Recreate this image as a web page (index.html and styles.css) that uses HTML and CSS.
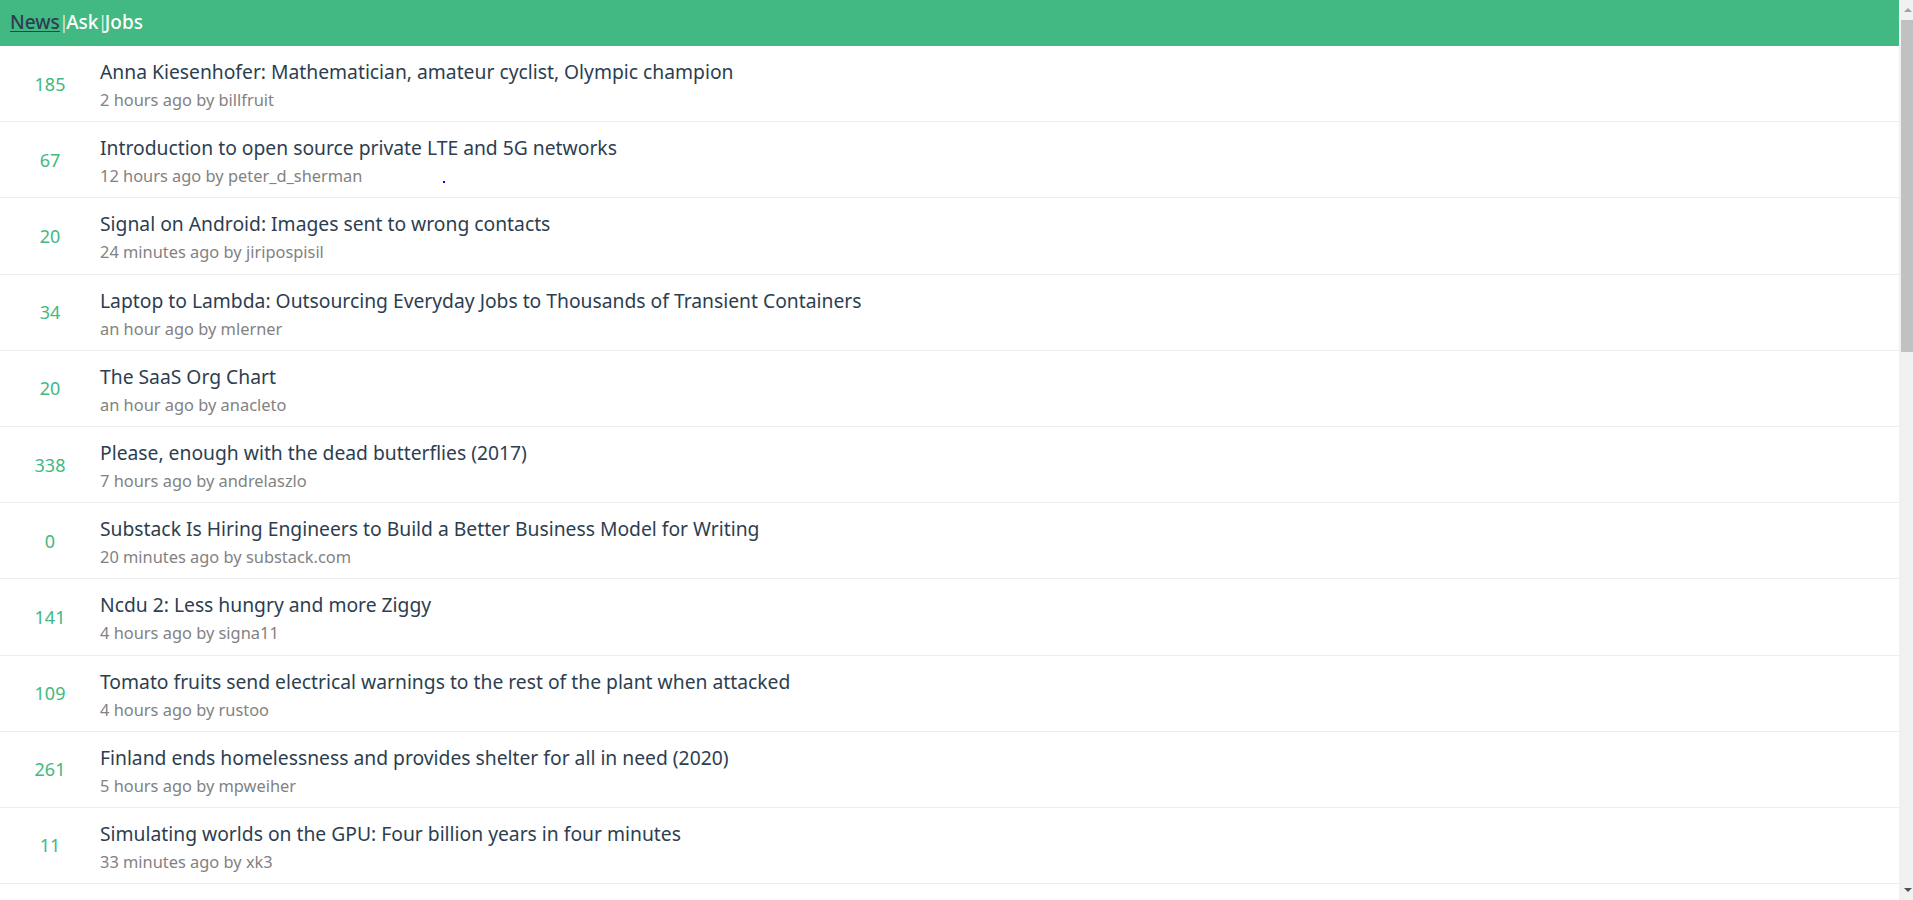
FILE: index.html
```html
<!DOCTYPE html>
<html lang="en">
<head>
<meta charset="utf-8">
<title>Hacker News</title>
<link rel="stylesheet" href="styles.css">
</head>
<body>
<header class="topbar">
  <nav class="nav">
    <a class="nav-link active" href="#">News</a><span class="sep">|</span><a class="nav-link" href="#">Ask</a><span class="sep">|</span><a class="nav-link" href="#">Jobs</a>
  </nav>
</header>
<main class="list">
  <div class="item"><div class="score">185</div><div class="body"><div class="title">Anna Kiesenhofer: Mathematician, amateur cyclist, Olympic champion</div><div class="meta">2 hours ago by billfruit</div></div></div>
  <div class="item"><div class="score">67</div><div class="body"><div class="title">Introduction to open source private LTE and 5G networks</div><div class="meta">12 hours ago by peter_d_sherman</div></div><span class="dot"></span></div>
  <div class="item"><div class="score">20</div><div class="body"><div class="title">Signal on Android: Images sent to wrong contacts</div><div class="meta">24 minutes ago by jiripospisil</div></div></div>
  <div class="item"><div class="score">34</div><div class="body"><div class="title">Laptop to Lambda: Outsourcing Everyday Jobs to Thousands of Transient Containers</div><div class="meta">an hour ago by mlerner</div></div></div>
  <div class="item"><div class="score">20</div><div class="body"><div class="title">The SaaS Org Chart</div><div class="meta">an hour ago by anacleto</div></div></div>
  <div class="item"><div class="score">338</div><div class="body"><div class="title">Please, enough with the dead butterflies (2017)</div><div class="meta">7 hours ago by andrelaszlo</div></div></div>
  <div class="item"><div class="score">0</div><div class="body"><div class="title">Substack Is Hiring Engineers to Build a Better Business Model for Writing</div><div class="meta">20 minutes ago by substack.com</div></div></div>
  <div class="item"><div class="score">141</div><div class="body"><div class="title">Ncdu 2: Less hungry and more Ziggy</div><div class="meta">4 hours ago by signa11</div></div></div>
  <div class="item"><div class="score">109</div><div class="body"><div class="title">Tomato fruits send electrical warnings to the rest of the plant when attacked</div><div class="meta">4 hours ago by rustoo</div></div></div>
  <div class="item"><div class="score">261</div><div class="body"><div class="title">Finland ends homelessness and provides shelter for all in need (2020)</div><div class="meta">5 hours ago by mpweiher</div></div></div>
  <div class="item"><div class="score">11</div><div class="body"><div class="title">Simulating worlds on the GPU: Four billion years in four minutes</div><div class="meta">33 minutes ago by xk3</div></div></div>
  <div class="item"><div class="score">92</div><div class="body"><div class="title">Show HN: A tiny self-hosted analytics tool written in Go</div><div class="meta">3 hours ago by tomsmith</div></div></div>
  <div class="item"><div class="score">47</div><div class="body"><div class="title">The history of the IBM PC keyboard</div><div class="meta">2 hours ago by ingve</div></div></div>
  <div class="item"><div class="score">213</div><div class="body"><div class="title">Why is it so hard to buy things that work well? (2020)</div><div class="meta">8 hours ago by todsacerdoti</div></div></div>
  <div class="item"><div class="score">58</div><div class="body"><div class="title">Rust for Linux: Second version of the patch series posted</div><div class="meta">3 hours ago by chmaynard</div></div></div>
  <div class="item"><div class="score">14</div><div class="body"><div class="title">A visual guide to SQLite's B-tree format</div><div class="meta">50 minutes ago by feross</div></div></div>
  <div class="item"><div class="score">176</div><div class="body"><div class="title">How we scaled our Postgres database to billions of rows</div><div class="meta">6 hours ago by pcr910303</div></div></div>
  <div class="item"><div class="score">39</div><div class="body"><div class="title">The surprising origins of the term “software engineering”</div><div class="meta">2 hours ago by zdw</div></div></div>
  <div class="item"><div class="score">122</div><div class="body"><div class="title">Ask HN: What is your favorite underrated programming book?</div><div class="meta">5 hours ago by throwaway_dev</div></div></div>
  <div class="item"><div class="score">8</div><div class="body"><div class="title">Reverse engineering the 8086 processor's microcode</div><div class="meta">15 minutes ago by kens</div></div></div>
  <div class="item"><div class="score">64</div><div class="body"><div class="title">Building a home lab on a budget</div><div class="meta">4 hours ago by samizdis</div></div></div>
  <div class="item"><div class="score">301</div><div class="body"><div class="title">The unreasonable effectiveness of simple HTML</div><div class="meta">9 hours ago by gk1</div></div></div>
  <div class="item"><div class="score">27</div><div class="body"><div class="title">A new approach to compressing neural networks</div><div class="meta">an hour ago by belter</div></div></div>
  <div class="item"><div class="score">85</div><div class="body"><div class="title">Learning to read ancient manuscripts with machine learning</div><div class="meta">6 hours ago by Hooke</div></div></div>
  <div class="item"><div class="score">19</div><div class="body"><div class="title">Writing a small ray tracer in C</div><div class="meta">40 minutes ago by mfiguiere</div></div></div>
  <div class="item"><div class="score">153</div><div class="body"><div class="title">The quiet death of the personal website</div><div class="meta">7 hours ago by bookofjoe</div></div></div>
  <div class="item"><div class="score">42</div><div class="body"><div class="title">Understanding memory allocators from the ground up</div><div class="meta">3 hours ago by ibobev</div></div></div>
  <div class="item"><div class="score">71</div><div class="body"><div class="title">Launch HN: A better way to manage on-call schedules</div><div class="meta">4 hours ago by dkrw</div></div></div>
  <div class="item"><div class="score">23</div><div class="body"><div class="title">Notes on structured concurrency</div><div class="meta">an hour ago by luu</div></div></div>
  <div class="item"><div class="score">96</div><div class="body"><div class="title">The economics of open source maintenance</div><div class="meta">5 hours ago by jseliger</div></div></div>
</main>
<div class="scrollbar" aria-hidden="true">
  <span class="arrow arrow-up"></span>
  <span class="thumb"></span>
  <span class="arrow arrow-down"></span>
</div>
</body>
</html>
```

FILE: styles.css
```css
html, body {
  margin: 0;
  padding: 0;
}
body {
  font-family: "Noto Sans", "Open Sans", sans-serif;
  color: #2c3e50;
  background: #fff;
  margin-right: 14px;
}
.topbar {
  background: #42b883;
  height: 46px;
  display: flex;
  align-items: center;
  padding: 0 10px;
}
.nav {
  font-size: 19px;
  font-weight: 500;
  color: #fff;
  line-height: 1;
  margin-top: -1px;
}
.nav-link {
  color: #fff;
  text-decoration: none;
}
.nav-link.active {
  color: #2c3e50;
  text-decoration: underline;
  text-underline-offset: 2px;
}
.sep {
  color: #fff;
  font-weight: 300;
  margin: 0 -3px 0 -1px;
}
.list {
  display: block;
}
.item {
  position: relative;
  display: flex;
  align-items: center;
  height: 75.2px;
  border-bottom: 1px solid #eee;
}
.score {
  width: 100px;
  flex: none;
  text-align: center;
  color: #42b883;
  font-size: 18px;
}
.body {
  display: flex;
  flex-direction: column;
  padding-top: 4px;
}
.title {
  font-size: 19.3px;
  line-height: 24px;
  color: #2c3e50;
}
.meta {
  font-size: 16.4px;
  line-height: 22px;
  margin-top: 5px;
  color: #828282;
}
.dot {
  position: absolute;
  left: 443px;
  top: 59px;
  width: 2px;
  height: 2px;
  background: #0000ff;
}
.scrollbar {
  position: fixed;
  top: 0;
  left: 1899px;
  width: 17px;
  height: 900px;
  background: #f1f1f1;
}
.thumb {
  position: absolute;
  left: 2px;
  right: 2px;
  top: 20px;
  height: 332px;
  background: #c1c1c1;
}
.arrow {
  position: absolute;
  left: 50%;
  margin-left: -4px;
  width: 0;
  height: 0;
  border-left: 4px solid transparent;
  border-right: 4px solid transparent;
}
.arrow-up {
  top: 8px;
  border-bottom: 4px solid #a3a3a3;
}
.arrow-down {
  bottom: 8px;
  border-top: 4px solid #505050;
}
```
